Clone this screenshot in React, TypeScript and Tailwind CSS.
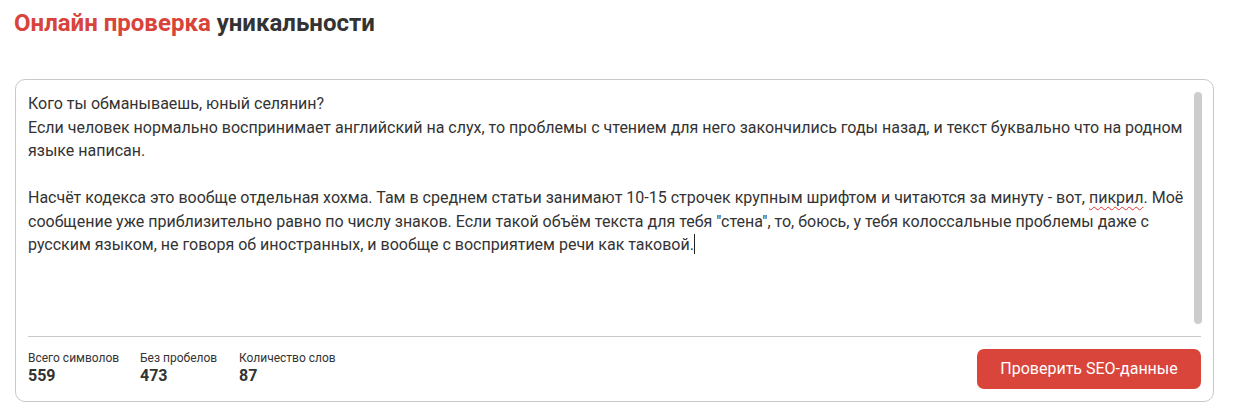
import React from 'react';

const lines: string[][] = [
  ['Кого ты обманываешь, юный селянин?'],
  ['Если человек нормально воспринимает английский на слух, то проблемы с чтением для него закончились годы назад, и текст буквально что на родном'],
  ['языке написан.'],
  [''],
  ['Насчёт кодекса это вообще отдельная хохма. Там в среднем статьи занимают 10-15 строчек крупным шрифтом и читаются за минуту - вот, ', 'пикрил', '. Моё'],
  ['сообщение уже приблизительно равно по числу знаков. Если такой объём текста для тебя "стена", то, боюсь, у тебя колоссальные проблемы даже с'],
  ['русским языком, не говоря об иностранных, и вообще с восприятием речи как таковой.'],
];

const stats = [
  { label: 'Всего символов', value: '559', w: 'w-[112px]' },
  { label: 'Без пробелов', value: '473', w: 'w-[99px]' },
  { label: 'Количество слов', value: '87', w: 'w-[120px]' },
];

export default function App() {
  return (
    <div className="w-[1247px] h-[418px] bg-white font-['Roboto',sans-serif] text-[#333] pl-[15px] pr-[33px]">
      <h1 className="pt-[9px] text-[24px] leading-[28px] font-bold -ml-[1px]">
        <span className="text-[#d8433a]">Онлайн проверка</span> <span className="text-[#333]">уникальности</span>
      </h1>

      <div className="mt-[42px] h-[323px] border border-[#c9c9c9] rounded-[10px] flex flex-col pl-[12px] pr-[11px] pt-[12px]">
        <div className="flex flex-1 min-h-0">
          <div className="flex-1 text-[16px] leading-[23.5px] text-[#333] whitespace-nowrap">
            {lines.map((l, i) => (
              <div key={i} className="h-[23.5px]">
                {l.length === 1 ? (
                  <>
                    {l[0]}
                    {i === lines.length - 1 && <span className="inline-block w-px h-[20px] bg-[#222] align-[-4px]" />}
                  </>
                ) : (
                  <>
                    {l[0]}
                    <span className="underline decoration-wavy decoration-[#e03030] decoration-1 underline-offset-[3px]">{l[1]}</span>
                    {l[2]}
                  </>
                )}
              </div>
            ))}
          </div>
          <div className="w-[8px] h-[232px] bg-[#cdcdcd] rounded-full" />
        </div>

        <div className="border-t border-[#c9c9c9] mr-[1px] flex items-center justify-between pt-[10px] pb-[12px]">
          <div className="flex -mt-[2px]">
            {stats.map((s) => (
              <div key={s.label} className={s.w}>
                <div className="text-[12px] leading-[16px] text-[#333]">{s.label}</div>
                <div className="text-[16px] leading-[19px] font-bold text-[#333]">{s.value}</div>
              </div>
            ))}
          </div>
          <button className="w-[224px] h-[40px] rounded-[7px] bg-[#d9453b] text-white text-[16px] mt-[2px]">
            Проверить SEO-данные
          </button>
        </div>
      </div>
    </div>
  );
}
